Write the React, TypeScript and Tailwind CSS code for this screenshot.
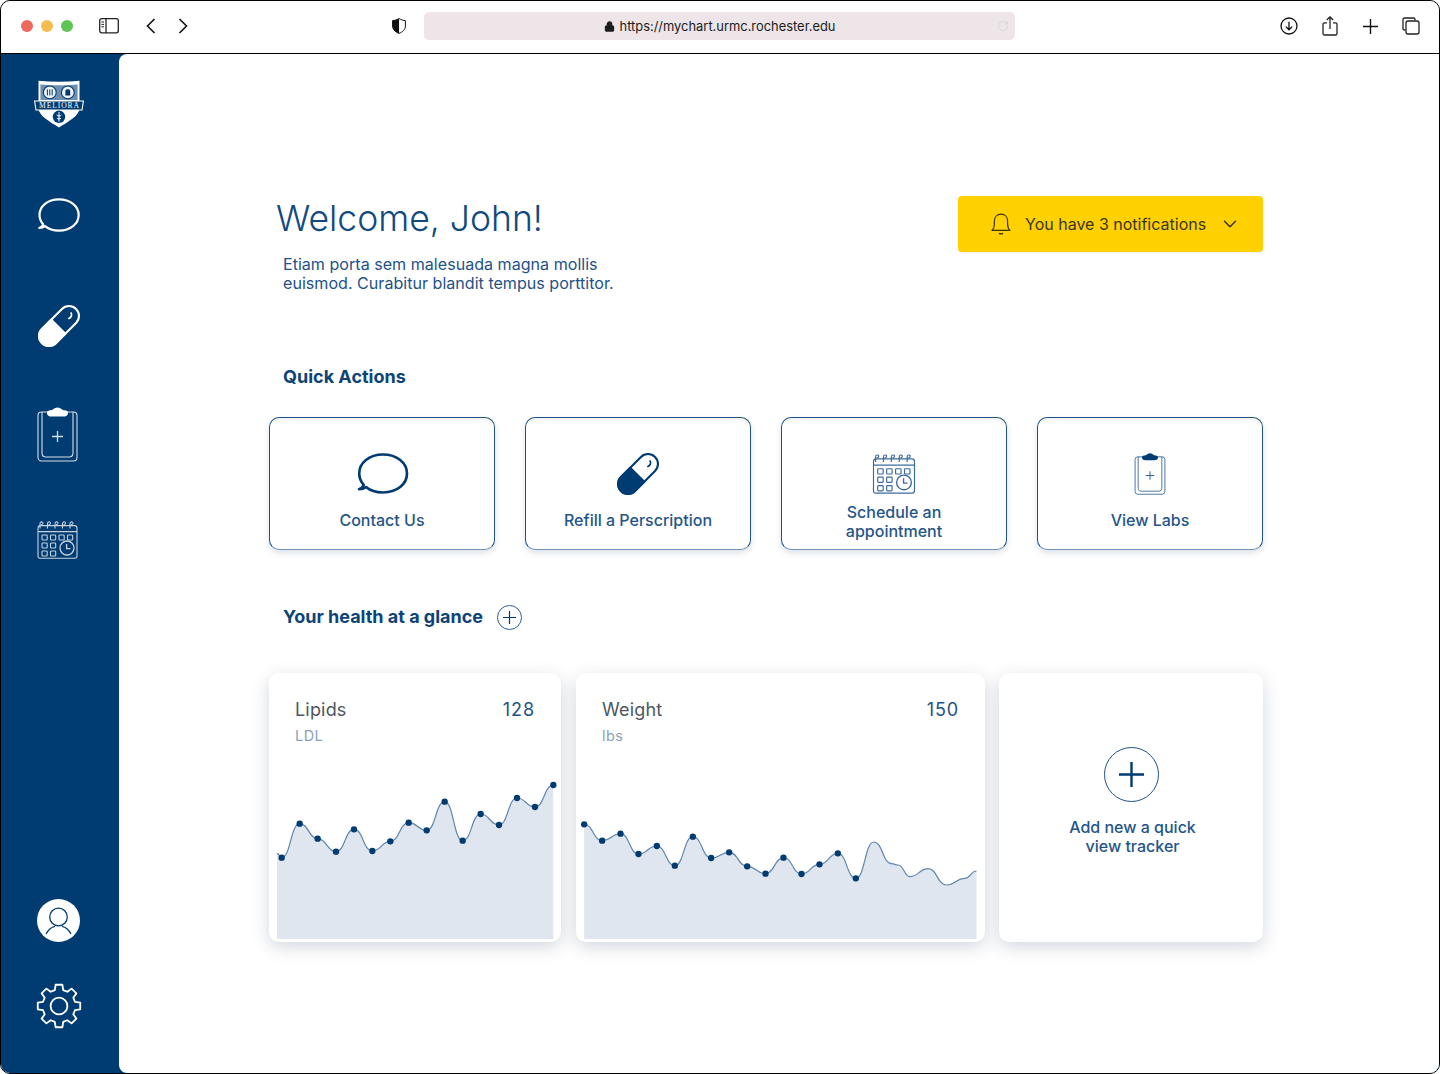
import { ChevronDown, Lock, RotateCw } from "lucide-react";

const NAVY = "#003B71";

// chart points are in units of 1/3 px
const lipidPoints = [
  [65, 578], [119, 476], [173, 521], [228, 560], [282, 493], [337, 558], [391, 529], [446, 473],
  [500, 496], [554, 410], [608, 527], [662, 447], [717, 480], [771, 399], [825, 426], [880, 360],
];
const weightPoints = [
  [43, 478], [97, 527], [152, 506], [206, 567], [261, 543], [315, 602], [369, 515], [424, 579],
  [478, 562], [532, 604], [587, 626], [641, 578], [695, 627], [749, 598], [804, 565], [858, 640],
];
const weightTail = [
  [912, 531], [965, 596], [985, 600], [1020, 635], [1075, 611], [1130, 660], [1185, 640], [1220, 618],
];

function smoothLine(points: number[][]) {
  let d = `M${points[0][0]} ${points[0][1]}`;
  for (let i = 1; i < points.length; i++) {
    const [x0, y0] = points[i - 1];
    const [x1, y1] = points[i];
    const mid = (x0 + x1) / 2;
    d += ` C${mid} ${y0} ${mid} ${y1} ${x1} ${y1}`;
  }
  return d;
}

function gearPath() {
  const out: string[] = [];
  const teeth = 8;
  for (let i = 0; i < teeth; i++) {
    const a = (i / teeth) * Math.PI * 2 - Math.PI / 2;
    const step = (Math.PI * 2) / teeth;
    const at = (r: number, da: number) =>
      `${(23 + r * Math.cos(a + da)).toFixed(2)} ${(23 + r * Math.sin(a + da)).toFixed(2)}`;
    out.push(`${i === 0 ? "M" : "L"}${at(16.5, -step * 0.33)}`);
    out.push(`L${at(21.5, -step * 0.2)}`);
    out.push(`L${at(21.5, step * 0.2)}`);
    out.push(`L${at(16.5, step * 0.33)}`);
  }
  return out.join(" ") + " Z";
}

function ChatIcon({ color, className }: { color: string; className: string }) {
  return (
    <svg viewBox="0 0 50 40" fill="none" className={className}>
      <path
        d="M1.6 35.4C4.6 35.4 6.8 34.6 8.4 33.2C12.6 36.8 18.6 38.5 25 38.5C38.5 38.5 48.4 30.6 48.4 20C48.4 9.4 38.5 1.5 25 1.5C11.5 1.5 1.8 9.4 1.8 20C1.8 24.6 3.6 28.2 6.2 31.2C5.4 33 3.8 34.4 1.6 35.4Z"
        stroke={color}
        strokeWidth="2.6"
        strokeLinejoin="round"
      />
    </svg>
  );
}

function PillIcon({ color, hollow, className }: { color: string; hollow: string; className: string }) {
  return (
    <svg viewBox="0 0 42 42" fill="none" className={className}>
      <g transform="rotate(-45 21 21)">
        <rect x="-2" y="11.5" width="46" height="19" rx="9.5" fill={hollow} stroke={color} strokeWidth="2" />
        <path d="M7.5 10.5H21V31.5H7.5C1.8 31.5 -3 26.7 -3 21C-3 15.3 1.8 10.5 7.5 10.5Z" fill={color} />
      </g>
      <path d="M32.5 8.5C33.6 10.6 32.8 12.8 30.4 13.8" stroke={color} strokeWidth="1.6" strokeLinecap="round" />
    </svg>
  );
}

function ClipboardIcon({ color, clip, className }: { color: string; clip: string; className: string }) {
  return (
    <svg viewBox="0 0 41 55" fill="none" className={className}>
      <rect x="1" y="5" width="39" height="49" rx="3.5" stroke={color} strokeWidth="1.1" />
      <path d="M5 5V46C5 48.6 6.4 50 9 50H32C34.6 50 36 48.6 36 46V5" stroke={color} strokeWidth="1.1" />
      <path d="M10 6C10 3.6 12.4 3.4 15 3C17 1.4 18.6 .4 20.5 .4C22.4 .4 24 1.4 26 3C28.6 3.4 31 3.6 31 6C31 8.8 28.6 9.6 26 9.6H15C12.4 9.6 10 8.8 10 6Z" fill={clip} />
      <path d="M20.5 24V35M15 29.5H26" stroke={color} strokeWidth="1.3" />
    </svg>
  );
}

function CalendarIcon({ color, className }: { color: string; className: string }) {
  const cells = [
    [5, 15], [13.5, 15], [22, 15], [30.5, 15],
    [5, 23], [13.5, 23],
    [5, 31], [13.5, 31],
  ];
  return (
    <svg viewBox="0 0 41 39" fill="none" stroke={color} strokeWidth="1.1" className={className}>
      <path d="M1 8C1 6.5 1.8 5.6 3.4 5.6H37.6C39.2 5.6 40 6.5 40 8V36C40 37.4 39.2 38.2 37.8 38.2H3.2C1.8 38.2 1 37.4 1 36V8Z" />
      <path d="M1 11.6H40" />
      {[3, 10.5, 18, 25.5, 33].map((x) => (
        <path key={x} d={`M${x} 8.5V3.5C${x} 1.6 ${x + 3} 1.2 ${x + 3} 3.2C${x + 3} 4.2 ${x + 2} 4.6 ${x + 1} 4.8`} />
      ))}
      {cells.map(([x, y]) => (
        <rect key={`${x}-${y}`} x={x} y={y} width="5.2" height="5" rx="0.8" />
      ))}
      <circle cx="30" cy="28" r="7" strokeWidth="1.3" />
      <path d="M29.6 24V28.6H33.4" strokeWidth="1.3" />
    </svg>
  );
}

function Crest() {
  return (
    <svg viewBox="0 0 50 48" fill="none" className="w-[50px] h-[48px]">
      <path d="M4.5 .8C18 2.2 32 2.2 45.5 .8V28C45.5 36 34 41.6 25 47.6C16 41.6 4.5 36 4.5 28V.8Z" fill="#fff" />
      <path d="M6.4 4.6C18 5.6 32 5.6 43.6 4.6V20H6.4V4.6Z" fill="#6e8fb0" />
      <circle cx="15.8" cy="12.4" r="6.4" fill="#eef2f6" stroke={NAVY} strokeWidth="1.1" />
      <circle cx="33.8" cy="12.4" r="6.4" fill="#eef2f6" stroke={NAVY} strokeWidth="1.1" />
      <path d="M13.4 9.4V15.4M15.8 9.4V15.4M18.2 9.4V15.4" stroke={NAVY} strokeWidth="1" />
      <path d="M31.4 15.6H36.2V11C36.2 8.8 31.4 8.8 31.4 11V15.6Z" fill={NAVY} />
      <path d="M.6 21H49.4L48 30H2L.6 21Z" fill={NAVY} stroke="#fff" strokeWidth="1.1" />
      <text x="25" y="28.4" textAnchor="middle" fontSize="7.6" fill="#fff" fontFamily="'Liberation Serif', serif" textLength="40">
        MELIORA
      </text>
      <circle cx="25" cy="36.8" r="6.2" fill={NAVY} />
      <path d="M25 32V41.6M22.6 35C24 36.4 26 36.4 27.4 35M23 38.2C24.5 39.2 25.5 39.2 27 38.2" stroke="#fff" strokeWidth="1" />
    </svg>
  );
}

function Toolbar() {
  return (
    <header className="h-[53px] shrink-0 flex items-center border-b border-black bg-white pl-[20px] pr-[19px] pb-[2px] rounded-t-[10px]">
      <span className="w-3 h-3 rounded-full bg-[#EE6A5F]" />
      <span className="w-3 h-3 rounded-full bg-[#F5BD4F] ml-2" />
      <span className="w-3 h-3 rounded-full bg-[#61C454] ml-2" />
      <svg viewBox="0 0 20 16" fill="none" stroke="#222" className="w-5 h-4 ml-[26px]">
        <rect x=".7" y=".7" width="18.6" height="14.1" rx="2" strokeWidth="1.3" />
        <path d="M7 1V15" strokeWidth="1.3" />
        <path d="M2.4 4H5M2.4 6.4H5M2.4 8.8H5" strokeWidth="1" />
      </svg>
      <svg viewBox="0 0 10 16" fill="none" stroke="#111" strokeWidth="1.6" className="w-[10px] h-4 ml-[27px]">
        <path d="M8.5 1L1.5 8L8.5 15" />
      </svg>
      <svg viewBox="0 0 10 16" fill="none" stroke="#111" strokeWidth="1.6" className="w-[10px] h-4 ml-[22px]">
        <path d="M1.5 1L8.5 8L1.5 15" />
      </svg>
      <svg viewBox="0 0 14 16" className="w-[14px] h-4 ml-[204px]">
        <path d="M7 .6C9 1.8 11 2.4 13.4 2.6V8C13.4 11.6 10.6 14 7 15.4C3.4 14 .6 11.6 .6 8V2.6C3 2.4 5 1.8 7 .6Z" fill="#fff" stroke="#111" strokeWidth="1" />
        <path d="M7 .6C5 1.8 3 2.4 .6 2.6V8C.6 11.6 3.4 14 7 15.4V.6Z" fill="#111" />
      </svg>
      <div className="relative w-[591px] h-[28px] ml-[18px] pt-[1px] rounded-[5px] bg-[#EDE5E7] flex items-center justify-center text-[12.9px] text-[#1c1c1c]">
        <Lock size={11} strokeWidth={2.4} fill="#1c1c1c" className="mr-[5px]" />
        <span>https://mychart.urmc.rochester.edu</span>
        <RotateCw size={12} className="absolute right-[6px] top-[8px] text-[#dcd6d8]" />
      </div>
      <svg viewBox="0 0 18 18" fill="none" stroke="#111" strokeWidth="1.3" className="w-[18px] h-[18px] ml-auto">
        <circle cx="9" cy="9" r="8" />
        <path d="M9 4.8V12.6M5.8 9.6L9 12.8L12.2 9.6" />
      </svg>
      <svg viewBox="0 0 16 20" fill="none" stroke="#222" strokeWidth="1.3" className="w-4 h-5 ml-[24px] mb-[1px]">
        <path d="M5 6.8H2.6C1.6 6.8 1 7.4 1 8.4V17.4C1 18.4 1.6 19 2.6 19H13.4C14.4 19 15 18.4 15 17.4V8.4C15 7.4 14.4 6.8 13.4 6.8H11" />
        <path d="M8 13V1M4.8 4L8 .9L11.2 4" />
      </svg>
      <svg viewBox="0 0 15 15" fill="none" stroke="#111" strokeWidth="1.4" className="w-[15px] h-[15px] ml-[25px]">
        <path d="M7.5 0V15M0 7.5H15" />
      </svg>
      <svg viewBox="0 0 18 18" fill="none" stroke="#222" strokeWidth="1.3" className="w-[18px] h-[18px] ml-[24px]">
        <path d="M3.4 13H2.6C1.6 13 1 12.4 1 11.4V2.6C1 1.6 1.6 1 2.6 1H11.4C12.4 1 13 1.6 13 2.6V3.4" />
        <rect x="4" y="4" width="13" height="13" rx="2" />
      </svg>
    </header>
  );
}

function Sidebar() {
  return (
    <aside className="w-[118px] shrink-0 flex flex-col items-center pt-[26px] pb-[44px] pr-[2px]">
      <Crest />
      <ChatIcon color="#fff" className="w-[42px] h-[34px] mt-[70px] -ml-[1px]" />
      <PillIcon color="#fff" hollow={NAVY} className="w-[44px] h-[44px] mt-[72px] -ml-[1px]" />
      <ClipboardIcon color="#d5deea" clip="#fff" className="w-[41px] h-[55px] mt-[59px] -ml-[3px]" />
      <CalendarIcon color="#c5d2e0" className="w-[41px] h-[39px] mt-[58px] -ml-[3px]" />
      <div className="mt-auto w-[43px] h-[43px] rounded-full bg-white flex items-center justify-center overflow-hidden -ml-[1px]">
        <svg viewBox="0 0 43 43" fill="none" stroke={NAVY} strokeWidth="1.3" className="w-[43px] h-[43px]">
          <circle cx="21.5" cy="18" r="8.8" />
          <path d="M9 35C11.5 30.5 15 28 18 27.4M34 35C31.5 30.5 28 28 25 27.4" />
        </svg>
      </div>
      <svg viewBox="0 0 46 46" fill="none" stroke="#fff" strokeWidth="1.8" strokeLinejoin="round" className="w-[46px] h-[46px] mt-[41px]">
        <path d={gearPath()} />
        <circle cx="23" cy="23" r="8.4" />
      </svg>
    </aside>
  );
}

const actionCard =
  "w-[226px] h-[133px] rounded-[10px] border border-[#1f5288] border-b-[#6f94b8] bg-white shadow-[0_3px_6px_rgba(0,40,80,0.14),inset_0_6px_4px_-3px_rgba(0,0,0,0.05)] flex flex-col items-center text-[16px] leading-[19px] font-medium text-[#24558a]";

function QuickActions() {
  return (
    <div className="flex gap-[30px] mt-[29px]">
      <div className={actionCard}>
        <ChatIcon color={NAVY} className="w-[52px] h-[41px] mt-[35px] ml-[2px]" />
        <span className="mt-[17px]">Contact Us</span>
      </div>
      <div className={actionCard}>
        <PillIcon color={NAVY} hollow="#fff" className="w-[44px] h-[44px] mt-[34px]" />
        <span className="mt-[15px]">Refill a Perscription</span>
      </div>
      <div className={actionCard}>
        <CalendarIcon color="#3a6a9c" className="w-[44px] h-[41px] mt-[35px]" />
        <span className="mt-[9px] text-center w-[120px]">Schedule an appointment</span>
      </div>
      <div className={actionCard}>
        <ClipboardIcon color="#2b5f95" clip={NAVY} className="w-[32px] h-[42px] mt-[35px]" />
        <span className="mt-[16px]">View Labs</span>
      </div>
    </div>
  );
}

function Chart({ line, dots, viewBox, left, right, width }: { line: number[][]; dots: number[][]; viewBox: string; left: number; right: number; width: string }) {
  const d = smoothLine(line);
  return (
    <svg viewBox={viewBox} className={`${width} h-[169px] mt-auto mb-[3px] mx-auto overflow-visible`}>
      <path d={`${d} L${right} 822 L${left} 822 Z`} fill="#E0E6EF" />
      <path d={d} fill="none" stroke="#5f86ad" strokeWidth="3.6" />
      {dots.map(([x, y]) => (
        <circle key={x} cx={x} cy={y} r="9.5" fill={NAVY} />
      ))}
    </svg>
  );
}

function TrackerCard({ title, unit, value, className, children }: { title: string; unit: string; value: string; className: string; children: React.ReactNode }) {
  return (
    <div className={`h-[269px] rounded-[10px] bg-white shadow-[0_5px_18px_rgba(0,40,80,0.18)] flex flex-col ${className}`}>
      <div className="flex justify-between pt-[26px] pl-[26px] pr-[26px] text-[18px] leading-[22px] tracking-[0.01em]">
        <span className="text-[#4d565f]">{title}</span>
        <span className="text-[#1f5288] tracking-[0.05em]">{value}</span>
      </div>
      <div className="pl-[26px] mt-[6px] text-[14.5px] leading-[17px] tracking-[0.03em] text-[#8ba2b5]">{unit}</div>
      {children}
    </div>
  );
}

function Health() {
  return (
    <div className="flex gap-[15px] mt-[43px]">
      <TrackerCard title="Lipids" unit="LDL" value="128" className="w-[292px]">
        <Chart line={[[51, 565], ...lipidPoints]} dots={lipidPoints} viewBox="51 315 828 507" left={51} right={880} width="w-[276px]" />
      </TrackerCard>
      <TrackerCard title="Weight" unit="lbs" value="150" className="w-[409px]">
        <Chart line={[...weightPoints, ...weightTail]} dots={weightPoints} viewBox="43 315 1178 507" left={43} right={1220} width="w-[393px]" />
      </TrackerCard>
      <div className="w-[264px] h-[269px] -ml-[1px] rounded-[10px] bg-white shadow-[0_5px_18px_rgba(0,40,80,0.18)] flex flex-col items-center pt-[74px]">
        <div className="w-[55px] h-[55px] rounded-full border-[1.5px] border-[#1f5288] flex items-center justify-center">
          <svg viewBox="0 0 25 25" fill="none" stroke={NAVY} strokeWidth="2.4" className="w-[25px] h-[25px]">
            <path d="M12.5 0V25M0 12.5H25" />
          </svg>
        </div>
        <p className="mt-[16px] ml-[3px] w-[150px] text-center text-[16px] leading-[19px] font-medium text-[#24558a]">
          Add new a quick view tracker
        </p>
      </div>
    </div>
  );
}

export default function App() {
  return (
    <div className="w-[1440px] h-[1074px] bg-white overflow-hidden font-['Inter','Noto_Sans',sans-serif]">
      <div className="w-full h-full flex flex-col border border-black rounded-[10px] overflow-hidden">
        <Toolbar />
        <div className="flex-1 flex bg-[#003B71] min-h-0">
          <Sidebar />
          <main className="flex-1 bg-white rounded-l-[8px] pl-[150px] pt-[142px]">
            <div className="w-[994px]">
              <div className="flex justify-between items-start">
                <div>
                  <h1 className="pl-[7px] pt-[1px] text-[35.5px] leading-[44px] font-light text-[#0f4a80]">Welcome, John!</h1>
                  <p className="pl-[14px] mt-[14px] text-[16.1px] leading-[19px] text-[#1f5288]">
                    Etiam porta sem malesuada magna mollis
                    <br />
                    euismod. Curabitur blandit tempus porttitor.
                  </p>
                </div>
                <button className="w-[305px] h-[56px] rounded-[4px] bg-[#FFD100] flex items-center pl-[33px] text-[16px] text-[#3b3520] shadow-[0_1px_2px_rgba(0,0,0,0.08)]">
                  <svg viewBox="0 0 20 22" fill="none" stroke="#3b3210" strokeWidth="1.2" className="w-5 h-[22px] mr-[14px]">
                    <path d="M1 17.4C2.6 16 3.4 14 3.4 11V8C3.4 4 6 1.2 10 1.2C14 1.2 16.6 4 16.6 8V11C16.6 14 17.4 16 19 17.4H1Z" strokeLinejoin="round" />
                    <path d="M8 20.4C9.2 21 10.8 21 12 20.4" />
                  </svg>
                  <span>You have 3 notifications</span>
                  <ChevronDown size={22} strokeWidth={1.6} className="ml-[13px] text-[#3b3210]" />
                </button>
              </div>
              <h2 className="pl-[14px] mt-[73px] text-[18px] leading-[22px] font-bold text-[#0d4478]">Quick Actions</h2>
              <QuickActions />
              <div className="flex items-center pl-[14px] mt-[54px]">
                <h2 className="text-[18px] leading-[26px] font-bold text-[#0d4478]">Your health at a glance</h2>
                <div className="ml-[14px] w-[25px] h-[25px] rounded-full border border-[#2b5f95] flex items-center justify-center">
                  <svg viewBox="0 0 13 13" fill="none" stroke={NAVY} strokeWidth="1.2" className="w-[13px] h-[13px]">
                    <path d="M6.5 0V13M0 6.5H13" />
                  </svg>
                </div>
              </div>
              <Health />
            </div>
          </main>
        </div>
      </div>
    </div>
  );
}
